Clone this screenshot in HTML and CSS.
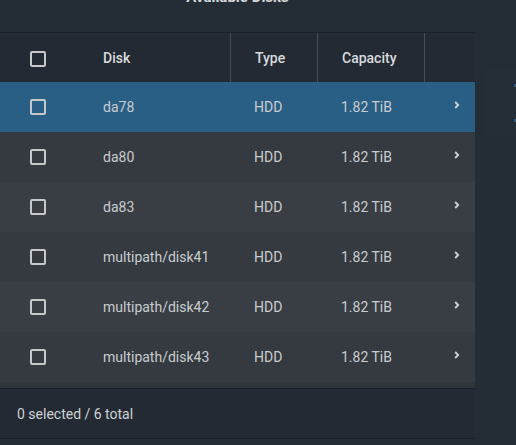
FILE: index.html
```html
<!DOCTYPE html>
<html>
<head>
<meta charset="utf-8">
<link rel="stylesheet" href="styles.css">
</head>
<body>
<div class="page">
  <div class="main">
    <div class="title">Available Disks</div>
    <div class="table">
      <div class="row head">
        <div class="cell check"><span class="box"></span></div>
        <div class="cell">Disk</div>
        <div class="cell div">Type</div>
        <div class="cell div">Capacity</div>
        <div class="cell div"></div>
      </div>
      <div class="row sel">
        <div class="cell check"><span class="box"></span></div>
        <div class="cell">da78</div>
        <div class="cell">HDD</div>
        <div class="cell">1.82 TiB</div>
        <div class="cell chev"><svg width="6" height="8" viewBox="0 0 6 8"><path d="M1.2 1 L4.2 4 L1.2 7" fill="none" stroke="#cfd3d6" stroke-width="1.8"/></svg></div>
      </div>
      <div class="row odd">
        <div class="cell check"><span class="box"></span></div>
        <div class="cell">da80</div>
        <div class="cell">HDD</div>
        <div class="cell">1.82 TiB</div>
        <div class="cell chev"><svg width="6" height="8" viewBox="0 0 6 8"><path d="M1.2 1 L4.2 4 L1.2 7" fill="none" stroke="#cfd3d6" stroke-width="1.8"/></svg></div>
      </div>
      <div class="row even">
        <div class="cell check"><span class="box"></span></div>
        <div class="cell">da83</div>
        <div class="cell">HDD</div>
        <div class="cell">1.82 TiB</div>
        <div class="cell chev"><svg width="6" height="8" viewBox="0 0 6 8"><path d="M1.2 1 L4.2 4 L1.2 7" fill="none" stroke="#cfd3d6" stroke-width="1.8"/></svg></div>
      </div>
      <div class="row odd">
        <div class="cell check"><span class="box"></span></div>
        <div class="cell">multipath/disk41</div>
        <div class="cell">HDD</div>
        <div class="cell">1.82 TiB</div>
        <div class="cell chev"><svg width="6" height="8" viewBox="0 0 6 8"><path d="M1.2 1 L4.2 4 L1.2 7" fill="none" stroke="#cfd3d6" stroke-width="1.8"/></svg></div>
      </div>
      <div class="row even">
        <div class="cell check"><span class="box"></span></div>
        <div class="cell">multipath/disk42</div>
        <div class="cell">HDD</div>
        <div class="cell">1.82 TiB</div>
        <div class="cell chev"><svg width="6" height="8" viewBox="0 0 6 8"><path d="M1.2 1 L4.2 4 L1.2 7" fill="none" stroke="#cfd3d6" stroke-width="1.8"/></svg></div>
      </div>
      <div class="row odd">
        <div class="cell check"><span class="box"></span></div>
        <div class="cell">multipath/disk43</div>
        <div class="cell">HDD</div>
        <div class="cell">1.82 TiB</div>
        <div class="cell chev"><svg width="6" height="8" viewBox="0 0 6 8"><path d="M1.2 1 L4.2 4 L1.2 7" fill="none" stroke="#cfd3d6" stroke-width="1.8"/></svg></div>
      </div>
      <div class="spacer"></div>
      <div class="footer">0 selected / 6 total</div>
    </div>
  </div>
  <div class="aside"><span class="dot d1"></span><span class="dot d2"></span></div>
</div>
</body>
</html>
```

FILE: styles.css
```css
html, body {
  margin: 0;
  padding: 0;
  background: #242c35;
  height: 100%;
  overflow: hidden;
}
.page {
  display: flex;
  font-family: Roboto, "Liberation Sans", sans-serif;
  font-size: 14px;
  color: #c9cccf;
}
.main {
  width: 475px;
  flex: none;
}
.title {
  height: 45px;
  margin-top: -13px;
  text-align: center;
  font-size: 15px;
  font-weight: 700;
  color: #d6d9dc;
  line-height: 20px;
  box-sizing: border-box;
}
.table {
  border-top: 1px solid #1b2128;
  background: #232a33;
}
.row {
  display: grid;
  grid-template-columns: 79px 151px 87px 107px 51px;
  height: 50px;
}
.cell {
  display: flex;
  align-items: center;
  padding-left: 24px;
  box-sizing: border-box;
  white-space: nowrap;
}
.cell.check {
  padding-left: 30px;
}
.head {
  height: 49px;
  background: #232a33;
  font-weight: 500;
  color: #d8dbde;
}
.head .cell.div {
  border-left: 1px solid #464c54;
}
.head .cell.check {
  padding-top: 2px;
}
.sel { background: #2a5f85; }
.odd { background: #353a40; }
.even { background: #393e44; }
.box {
  width: 12px;
  height: 12px;
  border: 2px solid #c6c8ca;
  border-radius: 2px;
  display: block;
}
.chev {
  padding-left: 30px;
  align-items: flex-start;
  padding-top: 19px;
}
.spacer {
  height: 6px;
  background: #30353b;
  border-bottom: 1px solid #1b2128;
}
.footer {
  height: 49px;
  display: flex;
  align-items: center;
  padding-left: 17px;
  background: #232a33;
  border-bottom: 1px solid #1b2128;
  color: #cfd2d5;
}
.aside {
  width: 30px;
  height: 69px;
  margin-top: 68px;
  margin-left: 11px;
  background: #252e37;
  position: relative;
  flex: none;
}
.dot {
  position: absolute;
  right: 0;
  width: 2px;
  height: 3px;
  background: #2c5d80;
}
.d1 { top: 16px; }
.d2 { top: 51px; }
```
